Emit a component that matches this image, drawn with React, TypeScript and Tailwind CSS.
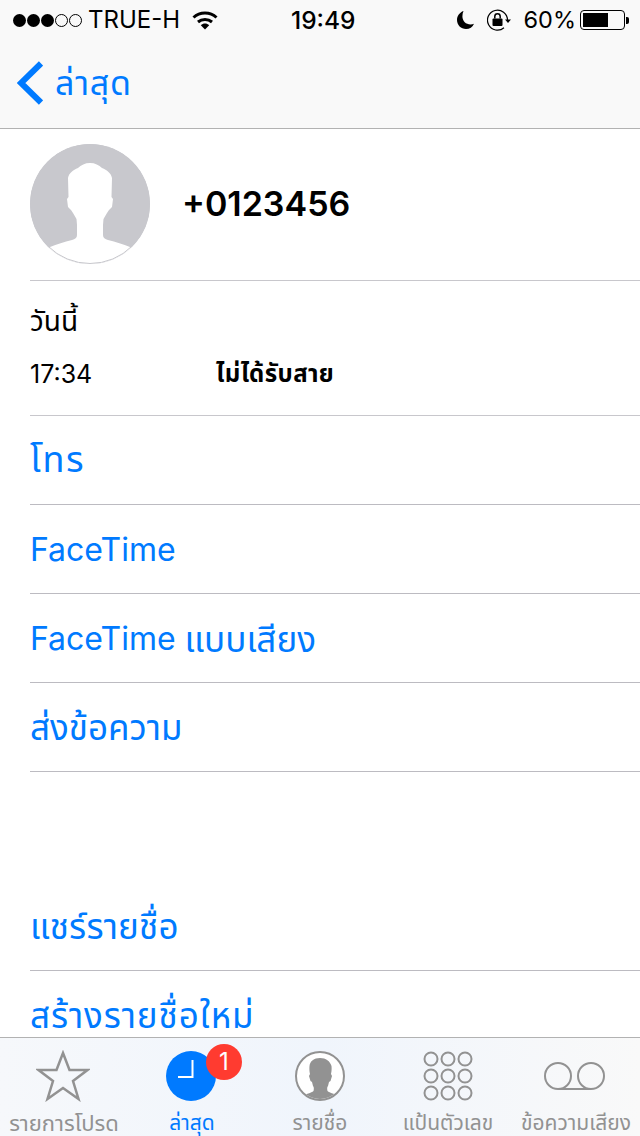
const FONT = "font-['Inter','Noto_Sans','Noto_Sans_Thai','Liberation_Sans',sans-serif]";

function Wifi() {
  return (
    <svg width="26" height="20" viewBox="0 0 26 20" fill="none" stroke="#000" strokeWidth="3">
      <path d="M1.5 7.5C7.8 1.6 18.2 1.6 24.5 7.5" />
      <path d="M6 12C10 8.6 16 8.6 20 12" />
      <path d="M13 19.5 8.8 15.2C11.2 13 14.8 13 17.2 15.2Z" fill="#000" stroke="none" />
    </svg>
  );
}

function Moon() {
  return (
    <svg width="19" height="20" viewBox="0 0 19 20">
      <path d="M7.5 1C3.6 2.4 1 5.9 1 10c0 5 4 9 9 9 3.600 0 6.700-2 8-5.300-1 .5-2.200.7-3.400.7C9.900 14.400 6.400 10.800 6.400 6.400c0-1.900.4-3.800 1.100-5.400Z" fill="#000" />
    </svg>
  );
}

function RotationLock() {
  return (
    <svg width="25" height="22" viewBox="0 0 25 22" fill="none">
      <path d="M20.500 11A10 10 0 1 0 17 18.800" stroke="#000" strokeWidth="1.200" />
      <path d="M18 10.500h6l-3 3.500Z" fill="#000" />
      <rect x="5.500" y="9.500" width="10" height="7.500" rx="1" fill="#000" />
      <path d="M7.800 9.500V7.500a2.700 2.700 0 0 1 5.400 0v2" stroke="#000" strokeWidth="1.500" />
    </svg>
  );
}

function StatusBar() {
  return (
    <div className="h-10 flex items-center justify-between text-[24px] text-black pl-[13px] pr-[11px]">
      <div className="flex items-center">
        <span className="flex gap-[1px]">
          {[0, 1, 2].map((i) => (
            <span key={i} className="w-[13px] h-[13px] rounded-full bg-black" />
          ))}
          {[3, 4].map((i) => (
            <span key={i} className="w-[13px] h-[13px] rounded-full border border-black" />
          ))}
        </span>
        <span className="ml-[6px]">TRUE-H</span>
        <span className="ml-[12px]"><Wifi /></span>
      </div>
      <span className="absolute left-[291px] font-medium text-[24.500px]">19:49</span>
      <div className="flex items-center">
        <Moon />
        <span className="ml-[12px]"><RotationLock /></span>
        <span className="ml-[12px] text-[23.500px]">60%</span>
        <span className="ml-[4px] flex items-center">
          <span className="w-[45px] h-[20px] border border-black rounded-[4px] p-[2px] block">
            <span className="block h-full w-[25px] bg-black" />
          </span>
          <span className="w-[3px] h-[7px] bg-black rounded-r-[2px] ml-[1px]" />
        </span>
      </div>
    </div>
  );
}

function NavBar() {
  return (
    <div className="h-[89px] border-b border-[#b2b2b2] flex items-center pl-[17px] pb-[2px]">
      <svg width="26" height="44" viewBox="0 0 26 44" fill="none" stroke="#007aff" strokeWidth="6">
        <path d="M24 2.500 4 22l20 19.500" />
      </svg>
      <span className="ml-[12px] text-[34px] tracking-[0.8px] text-[#007aff] leading-none">ล่าสุด</span>
    </div>
  );
}

function Avatar() {
  return (
    <svg width="120" height="120" viewBox="0 0 120 120" className="shrink-0">
      <defs>
        <clipPath id="disc"><circle cx="60" cy="60" r="60" /></clipPath>
      </defs>
      <circle cx="60" cy="60" r="60" fill="#c8c8cd" />
      <path
        clipPath="url(#disc)"
        d="M60 19C55 19 51 21 48 24C43 26 39 29 38 34L38.500 53L37 55L38 63L41 66L43 69L46.500 75L47 81L47 91C47 94 45 95 42 96C34 98 27 100 20 103L10 130L110 130L100 103C93 100 86 98 78 96C75 95 73 94 73 91L73 81L73.500 75L77 69L79 66L82 63L83 55L81.500 53L82 34C81 29 77 26 72 24C69 21 65 19 60 19Z"
        fill="#fff"
      />
      <circle cx="60" cy="60" r="59.500" fill="none" stroke="#c8c8cd" strokeWidth="1" />
    </svg>
  );
}

function ActionRow({ children, last }: { children: React.ReactNode; last?: boolean }) {
  return (
    <div className={`h-[89px] shrink-0 flex items-center ml-[30px] pt-[2px] text-[32px] text-[#007aff] whitespace-pre ${last ? "" : "border-b border-[#bcbbc1]"}`}>
      {children}
    </div>
  );
}

function Star() {
  return (
    <svg width="54" height="52" viewBox="0 0 54 52" fill="none" stroke="#929292" strokeWidth="2.500" className="mr-[3px]">
      <path d="M27 3 33.500 20H51.500L37 31 42.500 49 27 38 11.500 49 17 31 2.500 20H20.500Z" />
    </svg>
  );
}

function Clock() {
  return (
    <div className="relative w-[50px] h-[50px] rounded-full bg-[#007aff] mr-[2px]">
      <svg width="50" height="50" viewBox="0 0 50 50" fill="none" stroke="#fff" strokeWidth="2" className="absolute inset-0">
        <path d="M26.500 9v17H12" />
      </svg>
      <span className="absolute left-[40px] -top-[7px] w-9 h-9 rounded-full bg-[#ff3b30] text-white text-[24px] flex items-center justify-center">1</span>
    </div>
  );
}

function ContactsIcon() {
  return (
    <svg width="50" height="50" viewBox="0 0 50 50">
      <defs>
        <clipPath id="ring"><circle cx="25" cy="25" r="23" /></clipPath>
      </defs>
      <circle cx="25" cy="25" r="24" fill="#fff" stroke="#929292" strokeWidth="2" />
      <path
        clipPath="url(#ring)"
        d="M25 7c-6 0-10 3-10.500 8-.3 3 0 6 .5 8l-1 2 1.500 5 1.500 1 1 4c1 1 1 3 .5 5-2 2-8 3-11 5l-2 6h40l-2-6c-3-2-9-3-11-5-.5-2-.5-4 .5-5l1-4 1.500-1 1.500-5-1-2c.5-2 .8-5 .5-8C35 10 31 7 25 7Z"
        fill="#929292"
      />
    </svg>
  );
}

function Keypad() {
  return (
    <svg width="50" height="50" viewBox="0 0 50 50" fill="none" stroke="#929292" strokeWidth="2">
      {[8, 25, 42].map((y) =>
        [8, 25, 42].map((x) => <circle key={`${x}-${y}`} cx={x} cy={y} r="6.500" />),
      )}
    </svg>
  );
}

function Voicemail() {
  return (
    <svg width="64" height="30" viewBox="0 0 64 30" fill="none" stroke="#929292" strokeWidth="2" className="mr-[2px]">
      <circle cx="15" cy="15" r="13" />
      <circle cx="48" cy="15" r="13" />
      <path d="M15 28h33" />
    </svg>
  );
}

function Tab({ label, active, icon, size }: { label: string; active?: boolean; icon: React.ReactNode; size?: string }) {
  return (
    <div className="flex-1 relative flex flex-col items-center">
      <div className="h-[75px] flex items-center justify-center">{icon}</div>
      <span className={`${size ?? "text-[21px]"} -mt-[2px] leading-[24px] whitespace-nowrap ${active ? "text-[#007aff]" : "text-[#929292]"}`}>
        {label}
      </span>
    </div>
  );
}

function TabBar() {
  return (
    <div className="h-[99px] shrink-0 border-t border-[#b2b2b2] flex bg-gradient-to-r from-[#f6f8fb] via-[#f0f5fc] to-[#f9f9f9] overflow-hidden">
      <Tab label="รายการโปรด" size="text-[22px]" icon={<Star />} />
      <Tab label="ล่าสุด" active icon={<Clock />} />
      <Tab label="รายชื่อ" icon={<ContactsIcon />} />
      <Tab label="แป้นตัวเลข" icon={<Keypad />} />
      <Tab label="ข้อความเสียง" icon={<Voicemail />} />
    </div>
  );
}

export default function App() {
  return (
    <div className={`relative w-[640px] h-[1136px] bg-white flex flex-col overflow-hidden ${FONT}`}>
      <div className="shrink-0 bg-[#f9f9f9]">
        <StatusBar />
        <NavBar />
      </div>
      <div className="flex-1 min-h-0 overflow-hidden flex flex-col">
        <div className="h-[152px] shrink-0 ml-[30px] border-b border-[#c8c7cc] flex items-center pb-[2px]">
          <Avatar />
          <span className="ml-[32px] text-[34px] font-semibold text-black">+0123456</span>
        </div>
        <div className="h-[135px] shrink-0 ml-[30px] border-b border-[#c8c7cc] flex flex-col text-black">
          <div className="mt-[20px] text-[28px] leading-[40px]">วันนี้</div>
          <div className="mt-[18px] flex items-center text-[25px] leading-[30px]">
            <span className="w-[186px]">17:34</span>
            <span className="font-bold text-[24px] tracking-[0.4px]">ไม่ได้รับสาย</span>
          </div>
        </div>
        <ActionRow><span className="text-[36px] tracking-[1.500px] pb-[4px]">โทร</span></ActionRow>
        <ActionRow>FaceTime</ActionRow>
        <ActionRow>FaceTime <span className="text-[35px]">แบบเสียง</span></ActionRow>
        <ActionRow><span className="text-[35px] pb-[2px]">ส่งข้อความ</span></ActionRow>
        <div className="h-[110px] shrink-0" />
        <ActionRow><span className="text-[35px] tracking-[0.2px] pb-[2px]">แชร์รายชื่อ</span></ActionRow>
        <ActionRow last><span className="text-[35px] tracking-[0.9px] pb-[2px]">สร้างรายชื่อใหม่</span></ActionRow>
      </div>
      <TabBar />
    </div>
  );
}
